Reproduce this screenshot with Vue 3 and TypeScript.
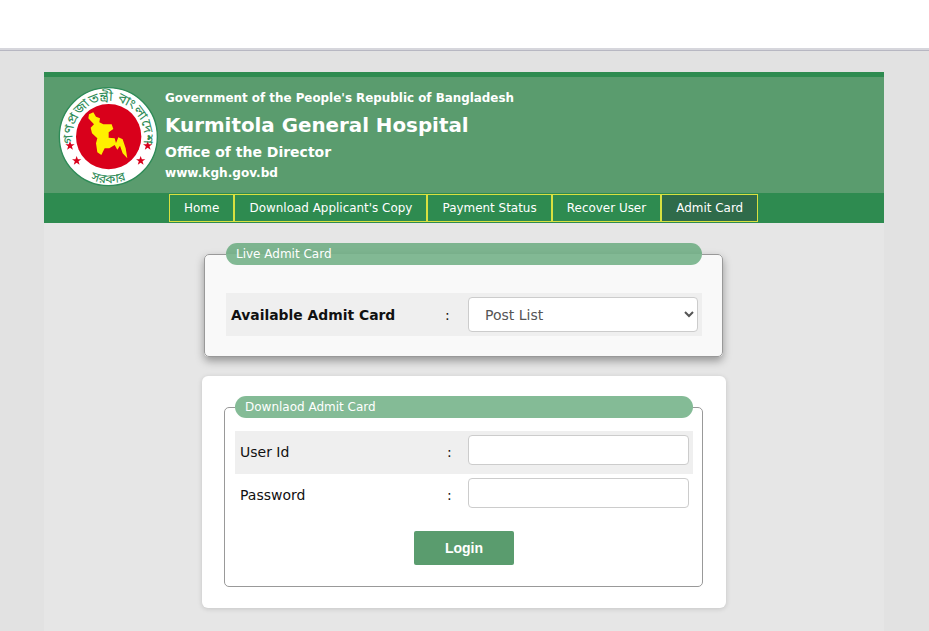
<template>
  <div class="page">
    <div class="topbar"></div>
    <div class="container">
      <header class="banner">
        <svg class="emblem" viewBox="0 0 345 345" width="115" height="115">
          <defs>
            <path id="arcTop" d="M 70 190 A 107 107 0 1 1 280 190" />
            <path id="arcBottom" d="M 90 281 A 140 140 0 0 0 260 281" />
          </defs>
          <circle cx="175" cy="170" r="147" fill="#fff" stroke="#2e8b57" stroke-width="4" />
          <circle cx="176" cy="170" r="98" fill="#d9001b" />
          <path class="map" transform="translate(90 75)" d="M27 28 L40 22 L48 35 L60 40 L58 52 L70 58 L95 58 L100 72 L86 82 L86 98 L104 100 L108 114 L115 97 L128 103 L137 130 L142 160 L128 145 L120 122 L112 134 L104 120 L88 130 L74 130 L64 150 L52 142 L48 115 L52 100 L36 85 L32 68 L42 58 L25 40 Z" />
          <g fill="#d9001b">
            <path v-for="s in stars" :key="s" :d="starPath" :transform="s" />
          </g>
          <text class="seal" font-size="40"><textPath href="#arcTop" textLength="378" lengthAdjust="spacingAndGlyphs">গণপ্রজাতন্ত্রী বাংলাদেশ</textPath></text>
          <text class="seal" font-size="38" text-anchor="middle"><textPath href="#arcBottom" startOffset="50%">সরকার</textPath></text>
        </svg>
        <div class="titles">
          <div class="gov">Government of the People's Republic of Bangladesh</div>
          <h1>Kurmitola General Hospital</h1>
          <div class="office">Office of the Director</div>
          <div class="site">www.kgh.gov.bd</div>
        </div>
      </header>
      <nav class="menu">
        <a v-for="item in menu" :key="item" :class="{ active: item === 'Admit Card' }">{{ item }}</a>
      </nav>
      <main class="content">
        <fieldset class="box live">
          <legend>Live Admit Card</legend>
          <div class="row shaded tall">
            <label class="strong">Available Admit Card</label>
            <span class="colon">:</span>
            <select class="control">
              <option>Post List</option>
            </select>
          </div>
        </fieldset>
        <section class="card">
          <fieldset class="box">
            <legend>Downlaod Admit Card</legend>
            <div class="row shaded">
              <label>User Id</label>
              <span class="colon">:</span>
              <input class="control" type="text" />
            </div>
            <div class="row">
              <label>Password</label>
              <span class="colon">:</span>
              <input class="control" type="password" />
            </div>
            <div class="actions">
              <button type="button">Login</button>
            </div>
          </fieldset>
        </section>
      </main>
    </div>
  </div>
</template>

<script setup lang="ts">
const menu: string[] = ['Home', "Download Applicant's Copy", 'Payment Status', 'Recover User', 'Admit Card']

const starPath = 'M0 -14 L3.6 -4.4 L14 -4.4 L5.6 1.8 L8.6 12 L0 6 L-8.6 12 L-5.6 1.8 L-14 -4.4 L-3.6 -4.4 Z'
const stars: string[] = ['translate(60 197)', 'translate(293 197)', 'translate(80 242)', 'translate(272 242)']
</script>

<style>
html,
body {
  margin: 0;
  background: #e2e2e2;
}
</style>

<style scoped>
.page {
  height: 631px;
  overflow: hidden;
  font-family: "DejaVu Sans", Verdana, sans-serif;
}

.topbar {
  height: 48px;
  background: #fff;
  border-bottom: 2px solid #d6d6dc;
  box-shadow: 0 1px 0 #b7b7c2;
}

.container {
  width: 840px;
  margin: 22px auto 0 44px;
  background: #e6e6e6;
  padding-bottom: 40px;
}

.banner {
  display: flex;
  height: 116px;
  background: #5a9c6e;
  border-top: 5px solid #2e8b50;
  color: #fff;
}

.emblem {
  flex: none;
  margin: 3px 0 0 6px;
}

.titles {
  padding-top: 13px;
  font-weight: bold;
}

.gov {
  font-size: 11.9px;
  line-height: 16px;
}

h1 {
  margin: 6px 0 0;
  font-size: 19.85px;
  line-height: 28px;
}

.office {
  margin-top: 3px;
  font-size: 14px;
  line-height: 18px;
}

.site {
  margin-top: 4px;
  font-size: 12.1px;
  line-height: 16px;
}

.menu {
  display: flex;
  height: 30px;
  padding-left: 125px;
  background: #2e8b50;
  box-sizing: border-box;
}

.menu a {
  height: 28px;
  box-sizing: border-box;
  margin-top: 1px;
  padding: 0 14.1px;
  border: 1px solid #d8e040;
  color: #fff;
  font-size: 11.95px;
  line-height: 26px;
}

.menu a.active {
  background: #2f6b4a;
}

.content {
  padding-top: 20px;
}

.box {
  margin: 0;
  padding: 0;
  min-width: 0;
  background: #fff;
  border: 1px solid #999;
  border-radius: 5px;
}

legend {
  padding: 0 10px;
  width: 100%;
  box-sizing: border-box;
  height: 22px;
  margin: 0;
  border-radius: 11px;
  background: rgba(80, 158, 105, 0.7);
  color: #fff;
  font-size: 12px;
  line-height: 22px;
}

.live {
  width: 519px;
  margin-left: 160px;
  padding: 0 20px 20px 21px;
  box-sizing: border-box;
  background: #f9f9f9;
  box-shadow: 0 4px 8px rgba(0, 0, 0, 0.35);
}

.row {
  display: flex;
  align-items: center;
  height: 43px;
  font-size: 14px;
  color: #111;
}

.row label {
  flex: none;
  width: 212px;
  padding-left: 5px;
  box-sizing: border-box;
}

.colon {
  flex: none;
  width: 21px;
}

.card .row label,
.card .row .colon {
  padding-bottom: 2px;
}

.shaded {
  background: #efefef;
}

.tall {
  margin-top: 28px;
}

.tall label {
  width: 219px;
  font-size: 13.9px;
}

.tall .colon {
  width: 23px;
}

.strong {
  font-weight: bold;
}

.control {
  align-self: flex-start;
  width: 221px;
  height: 30px;
  margin-top: 4px;
  box-sizing: border-box;
  padding: 0 12px;
  border: 1px solid #ccc;
  border-radius: 4px;
  background: #fff;
  font-family: inherit;
  font-size: 14px;
  color: #555;
}

select.control {
  width: 230px;
  height: 35px;
}

.card {
  width: 524px;
  box-sizing: border-box;
  margin: 19px 0 0 158px;
  padding: 20px 22px 21px;
  background: #fff;
  border-radius: 6px;
  box-shadow: 0 1px 5px rgba(0, 0, 0, 0.15);
}

.card .box {
  width: 479px;
  height: 191px;
  padding: 0 9px 0 10px;
  box-sizing: border-box;
}

.card .shaded {
  margin-top: 13px;
}

.actions {
  display: flex;
  justify-content: center;
  margin-top: 14px;
}

button {
  width: 100px;
  height: 34px;
  border: 0;
  border-radius: 2px;
  background: #5a9c6e;
  color: #fff;
  font-family: "Liberation Sans", Arial, sans-serif;
  font-size: 14px;
  font-weight: bold;
}

.map {
  fill: #fff000;
}

.seal {
  fill: #2e8b57;
  font-family: "Noto Sans Bengali", "Noto Sans", sans-serif;
}
</style>
